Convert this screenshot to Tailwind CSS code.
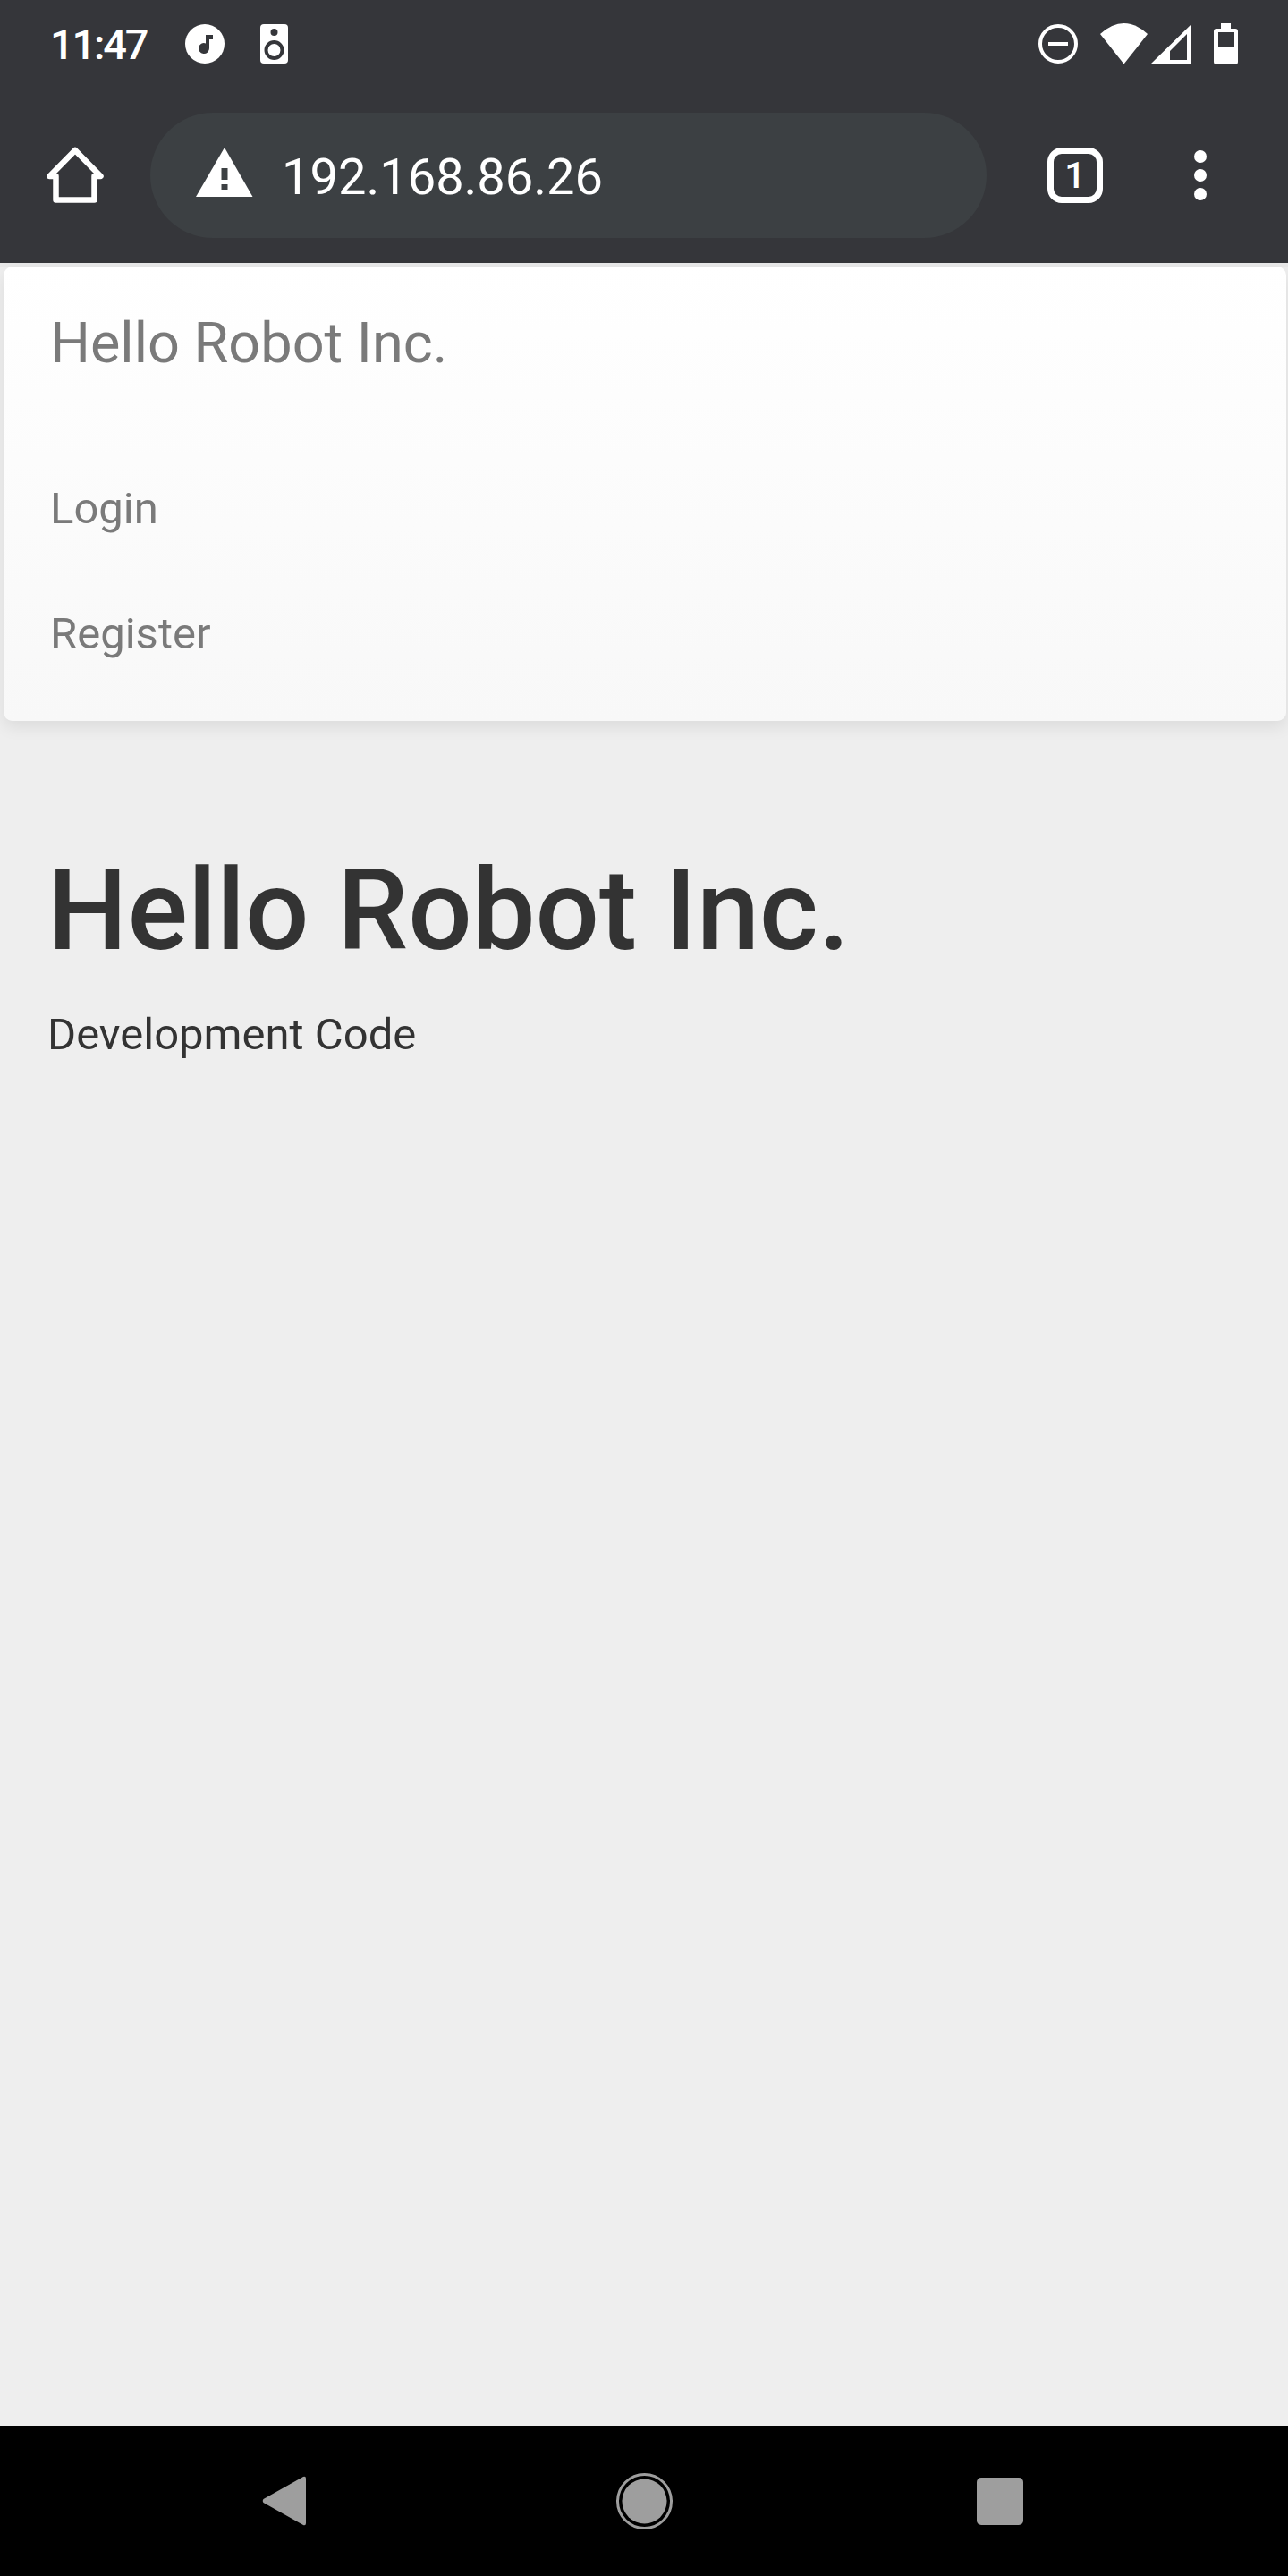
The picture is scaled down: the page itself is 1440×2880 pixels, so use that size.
<!DOCTYPE html>
<html>
<head>
<meta charset="utf-8">
<script src="https://cdn.jsdelivr.net/npm/@tailwindcss/browser@4"></script>
</head>
<body class="bg-[#eeeeee] font-['Roboto',sans-serif]">
<div class="w-[1440px] h-[2880px] flex flex-col overflow-hidden">
  <header class="bg-[#35363a] h-[294px] shrink-0 text-white">
    <div class="h-[98px] flex items-center pl-[56px] pr-[56px]">
      <span class="text-[47px] font-medium leading-none tracking-[-2.2px] w-[151px]">11:47</span>
      <svg class="w-[44px] h-[44px]" viewBox="207 27 44 44"><circle cx="229" cy="49" r="22" fill="#fff"/><path d="M230 39h8v5h-4v10a6 6 0 1 1-4-5.600z" fill="#35363a"/></svg>
      <svg class="w-[31px] h-[44px] ml-[40px]" viewBox="291 27 31 44"><rect x="291" y="27" width="31" height="44" rx="4" fill="#fff"/><circle cx="306.500" cy="36" r="4" fill="#35363a"/><circle cx="306.500" cy="56" r="9" fill="#fff" stroke="#35363a" stroke-width="4"/></svg>
      <div class="ml-auto flex items-center">
        <svg class="w-[44px] h-[44px]" viewBox="1161 27 44 44"><circle cx="1183" cy="49" r="20" fill="none" stroke="#fff" stroke-width="4"/><rect x="1172" y="47" width="22" height="4" fill="#fff"/></svg>
        <svg class="w-[53px] h-[46px] ml-[25px]" viewBox="1230 26 53 46"><path d="M1256.500 71.500L1230 38Q1256.500 14 1283 38z" fill="#fff"/></svg>
        <svg class="w-[45px] h-[46px] ml-[4px]" viewBox="1287 26 45 46"><path fill-rule="evenodd" d="M1287 71L1332 27V71zM1327 38L1308 57V67H1327z" fill="#fff"/></svg>
        <svg class="w-[27px] h-[46px] ml-[25px]" viewBox="1357 26 27 46"><path fill-rule="evenodd" d="M1365 26h11v6h5a3 3 0 0 1 3 3v34a3 3 0 0 1-3 3h-21a3 3 0 0 1-3-3V35a3 3 0 0 1 3-3h5zM1362 36v17h18V36z" fill="#fff"/></svg>
      </div>
    </div>
    <div class="h-[196px] flex items-center relative">
      <svg class="w-[64px] h-[64px] ml-[52px]" viewBox="52 164 64 64"><path d="M55.500 197L84 168L112.500 197H105.500V223.500H62.500V197z" fill="none" stroke="#fff" stroke-width="6.500" stroke-linejoin="round"/></svg>
      <div class="w-[935px] h-[140px] ml-[52px] rounded-full bg-[#3c4043] flex items-center">
        <svg class="w-[64px] h-[56px] ml-[51px] mb-[6px]" viewBox="219.500 164 64 56"><path d="M251.500 164L283 219H219.500z" fill="#fff"/><rect x="248" y="187" width="7" height="13" fill="#3c4043"/><rect x="248" y="205" width="7" height="6" fill="#3c4043"/></svg>
        <span class="ml-[32px] mt-[3px] text-[56px] leading-none">192.168.86.26</span>
      </div>
      <div class="w-[62px] h-[62px] ml-[68px] rounded-[16px] border-[7px] border-white flex items-center justify-center text-[41px] font-medium leading-none">1</div>
      <svg class="w-[14px] h-[56px] ml-[102px]" viewBox="1335 168 14 56"><circle cx="1342" cy="175" r="7" fill="#fff"/><circle cx="1342" cy="196" r="7" fill="#fff"/><circle cx="1342" cy="217" r="7" fill="#fff"/></svg>
    </div>
  </header>
  <div class="h-[4px] bg-[#e8e8e8] shrink-0"></div>
  <nav class="ml-[4px] mr-[2px] h-[508px] shrink-0 rounded-[10px] bg-linear-to-b from-white to-[#f8f8f8] shadow-[0_7px_18px_rgba(0,0,0,0.08)] pl-[52px] text-[#7a7a7a]">
    <div class="pt-[51px] h-[200px] text-[63px] leading-[70px]">Hello Robot Inc.</div>
    <div class="h-[140px] pt-[2px] flex items-center text-[49px]">Login</div>
    <div class="h-[140px] pt-[1px] flex items-center text-[49px]">Register</div>
  </nav>
  <main class="flex-1 pl-[53px] text-[#333333]">
    <h1 class="mt-[145px] text-[126px] font-medium leading-[134px]">Hello Robot Inc.</h1>
    <p class="mt-[37px] text-[49px] leading-[70px] text-[#333333]">Development Code</p>
  </main>
  <footer class="bg-black h-[168px] shrink-0 flex items-center">
    <svg class="w-[49px] h-[56px] ml-[293px]" viewBox="293 2768 49 56"><path d="M339 2769L294.500 2794Q293 2796 294.500 2798L339 2823Q342 2824 342 2821V2771Q342 2768 339 2769z" fill="#9e9e9e"/></svg>
    <svg class="w-[63px] h-[63px] ml-[347px]" viewBox="689 2764 63 63"><circle cx="720.500" cy="2795.500" r="30" fill="none" stroke="#9e9e9e" stroke-width="3"/><circle cx="720.500" cy="2795.500" r="25" fill="#9e9e9e"/></svg>
    <div class="w-[52px] h-[53px] ml-[340px] rounded-[5px] bg-[#9e9e9e]"></div>
  </footer>
</div>
</body>
</html>
